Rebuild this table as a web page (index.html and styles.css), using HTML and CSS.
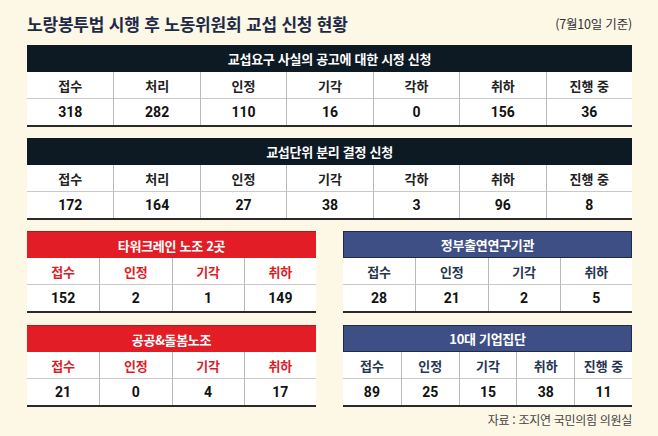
FILE: index.html
```html
<!DOCTYPE html>
<html lang="ko">
<head>
<meta charset="utf-8">
<link rel="stylesheet" href="styles.css">
</head>
<body>
<div class="page">
  <div class="title-row">
    <h1 class="title">노랑봉투법 시행 후 노동위원회 교섭 신청 현황</h1>
    <span class="date">(7월10일 기준)</span>
  </div>

  <div class="tbl cols7">
    <div class="head dark">교섭요구 사실의 공고에 대한 시정 신청</div>
    <div class="lab">접수</div><div class="lab">처리</div><div class="lab">인정</div><div class="lab">기각</div><div class="lab">각하</div><div class="lab">취하</div><div class="lab">진행 중</div>
    <div class="val">318</div><div class="val">282</div><div class="val">110</div><div class="val">16</div><div class="val">0</div><div class="val">156</div><div class="val">36</div>
  </div>

  <div class="tbl cols7">
    <div class="head dark">교섭단위 분리 결정 신청</div>
    <div class="lab">접수</div><div class="lab">처리</div><div class="lab">인정</div><div class="lab">기각</div><div class="lab">각하</div><div class="lab">취하</div><div class="lab">진행 중</div>
    <div class="val">172</div><div class="val">164</div><div class="val">27</div><div class="val">38</div><div class="val">3</div><div class="val">96</div><div class="val">8</div>
  </div>

  <div class="split">
    <div class="col">
      <div class="tbl cols4 red">
        <div class="head">타워크레인 노조 2곳</div>
        <div class="lab">접수</div><div class="lab">인정</div><div class="lab">기각</div><div class="lab">취하</div>
        <div class="val">152</div><div class="val">2</div><div class="val">1</div><div class="val">149</div>
      </div>
      <div class="tbl cols4 red">
        <div class="head">공공&amp;돌봄노조</div>
        <div class="lab">접수</div><div class="lab">인정</div><div class="lab">기각</div><div class="lab">취하</div>
        <div class="val">21</div><div class="val">0</div><div class="val">4</div><div class="val">17</div>
      </div>
    </div>
    <div class="col">
      <div class="tbl cols4 blue">
        <div class="head">정부출연연구기관</div>
        <div class="lab">접수</div><div class="lab">인정</div><div class="lab">기각</div><div class="lab">취하</div>
        <div class="val">28</div><div class="val">21</div><div class="val">2</div><div class="val">5</div>
      </div>
      <div class="tbl cols5 blue">
        <div class="head">10대 기업집단</div>
        <div class="lab">접수</div><div class="lab">인정</div><div class="lab">기각</div><div class="lab">취하</div><div class="lab">진행 중</div>
        <div class="val">89</div><div class="val">25</div><div class="val">15</div><div class="val">38</div><div class="val">11</div>
      </div>
      <div class="source">자료 : 조지연 국민의힘 의원실</div>
    </div>
  </div>
</div>
</body>
</html>
```

FILE: styles.css
```css
html, body {
  margin: 0;
  padding: 0;
  background: #fdf7e6;
}
body {
  font-family: "Roboto", "Noto Sans CJK KR", sans-serif;
  color: #1a1a1a;
  width: 658px;
  height: 436px;
  overflow: hidden;
}
.page {
  padding: 13px 26px 0 27px;
  display: flex;
  flex-direction: column;
  gap: 11px;
}
.title-row {
  display: flex;
  justify-content: space-between;
  align-items: center;
  height: 21px;
}
.title {
  margin: 0;
  font-family: "Noto Sans CJK KR", sans-serif;
  font-size: 17px;
  font-weight: 700;
  color: #1c2a48;
  letter-spacing: -0.2px;
  line-height: 21px;
}
.date {
  font-family: "Noto Sans CJK KR", sans-serif;
  font-size: 12.5px;
  color: #333;
  letter-spacing: -0.2px;
}
.tbl {
  display: grid;
  background: #fff;
  border-bottom: 2px solid #2a2a2a;
}
.cols7 { grid-template-columns: repeat(7, 1fr); }
.cols5 { grid-template-columns: repeat(5, 1fr); }
.cols4 { grid-template-columns: repeat(4, 1fr); }
.head {
  grid-column: 1 / -1;
  height: 27px;
  display: flex;
  align-items: center;
  justify-content: center;
  color: #fff;
  font-family: "Noto Sans CJK KR", sans-serif;
  font-weight: 700;
  font-size: 13px;
  letter-spacing: -0.3px;
  box-sizing: border-box;
}
.head.dark { background: #0d1a24; }
.red .head { background: #e31d25; border-top: 1px solid #b0161c; }
.blue .head { background: #3e4f85; border: 1px solid #1f2a4d; }
.lab, .val {
  display: flex;
  align-items: center;
  justify-content: center;
  border-left: 1px solid #b9b9b9;
  font-weight: 700;
  box-sizing: border-box;
}
.lab {
  height: 27px;
  border-bottom: 1px solid #c9c9c9;
  font-family: "Noto Sans CJK KR", sans-serif;
  font-size: 13px;
  color: #222;
}
.val {
  height: 26px;
  font-size: 14px;
  color: #111;
}
.tbl .lab:nth-child(2),
.cols7 .val:nth-child(9),
.cols5 .val:nth-child(7),
.cols4 .val:nth-child(6) { border-left: none; }
.red .lab { color: #d81f29; }
.blue .lab { color: #283552; }
.split {
  display: grid;
  grid-template-columns: 1fr 1fr;
  column-gap: 27px;
}
.col {
  display: flex;
  flex-direction: column;
  gap: 12px;
}
.source {
  margin-top: -8px;
  text-align: right;
  font-family: "Noto Sans CJK KR", sans-serif;
  font-size: 12px;
  color: #444;
  letter-spacing: -0.3px;
}
```
